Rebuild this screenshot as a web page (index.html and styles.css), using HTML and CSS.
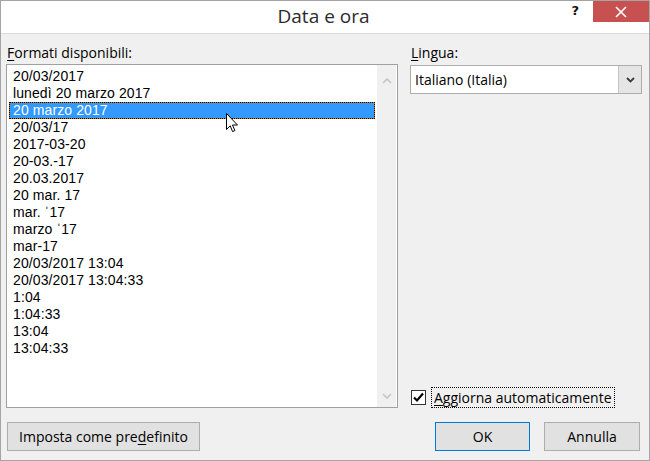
FILE: index.html
```html
<!DOCTYPE html>
<html lang="it">
<head>
<meta charset="utf-8">
<title>Data e ora</title>
<link rel="stylesheet" href="styles.css">
</head>
<body>
<div class="window">
  <div class="titlebar">
    <div class="tb-side"></div>
    <div class="title">Data e ora</div>
    <div class="tb-side tb-right">
      <span class="help">?</span>
      <span class="close"><svg width="12" height="12" viewBox="0 0 12 12"><path d="M1 1 L11 11 M11 1 L1 11" stroke="#fff" stroke-width="1.6" fill="none"/></svg></span>
    </div>
  </div>
  <div class="content">
    <div class="main">
      <div class="col col-left">
        <div class="label"><u>F</u>ormati disponibili:</div>
        <div class="listbox">
          <ul class="items">
            <li>20/03/2017</li>
            <li>lunedì 20 marzo 2017</li>
            <li class="selected">20 marzo 2017</li>
            <li>20/03/17</li>
            <li>2017-03-20</li>
            <li>20-03.-17</li>
            <li>20.03.2017</li>
            <li>20 mar. 17</li>
            <li>mar. ˈ17</li>
            <li>marzo ˈ17</li>
            <li>mar-17</li>
            <li>20/03/2017 13:04</li>
            <li>20/03/2017 13:04:33</li>
            <li>1:04</li>
            <li>1:04:33</li>
            <li>13:04</li>
            <li>13:04:33</li>
          </ul>
          <div class="scrollbar">
            <div class="sb-up"><svg width="10" height="6" viewBox="0 0 10 6"><path d="M1 5 L5 1 L9 5" stroke="#c4c4c4" stroke-width="1.6" fill="none"/></svg></div>
            <div class="sb-track"></div>
            <div class="sb-down"><svg width="10" height="6" viewBox="0 0 10 6"><path d="M1 1 L5 5 L9 1" stroke="#c4c4c4" stroke-width="1.6" fill="none"/></svg></div>
          </div>
          <svg class="cursor" width="13" height="20" viewBox="0 0 13 20"><path d="M0.5 0.5 L0.5 16.5 L4.2 12.8 L6.6 18.6 L8.9 17.6 L6.5 12 L11.5 12 Z" fill="#fff" stroke="#000" stroke-width="1" stroke-linejoin="miter"/></svg>
        </div>
      </div>
      <div class="col col-right">
        <div class="label"><u>L</u>ingua:</div>
        <div class="combo">
          <span class="combo-text">Italiano (Italia)</span>
          <span class="combo-btn"><svg width="9" height="6" viewBox="0 0 9 6"><path d="M1 1 L4.5 4.5 L8 1" stroke="#3c3c3c" stroke-width="1.8" fill="none"/></svg></span>
        </div>
        <div class="spacer"></div>
        <div class="check">
          <span class="box"><svg width="13" height="13" viewBox="0 0 13 13"><path d="M2 6.5 L5 9.5 L11 2.5" stroke="#000" stroke-width="2.2" fill="none"/></svg></span>
          <span class="check-label"><u>A</u>ggiorna automaticamente</span>
        </div>
      </div>
    </div>
    <div class="footer">
      <button class="btn btn-set">Imposta come pre<u>d</u>efinito</button>
      <div class="footer-right">
        <button class="btn btn-ok">OK</button>
        <button class="btn btn-cancel">Annulla</button>
      </div>
    </div>
  </div>
</div>
</body>
</html>
```

FILE: styles.css
```css
* { box-sizing: border-box; }
html, body { margin: 0; padding: 0; }
body {
  width: 650px;
  height: 461px;
  overflow: hidden;
  background: #f0f0f0;
  font-family: "Open Sans", "Noto Sans", sans-serif;
  font-size: 14px;
  color: #000;
}
u { text-decoration: underline; text-underline-offset: 2px; text-decoration-thickness: 1px; }

.window {
  width: 650px;
  height: 461px;
  border: 1px solid #a4a4a4;
  display: flex;
  flex-direction: column;
  background: #f0f0f0;
}

.titlebar {
  height: 33px;
  flex: none;
  background: #fff;
  border-bottom: 1px solid #dadada;
  display: grid;
  grid-template-columns: 1fr auto 1fr;
  align-items: start;
}
.title {
  font-size: 19px;
  line-height: 24px;
  padding-top: 3px;
  color: #2b2b2b;
  white-space: nowrap;
  margin-left: -3px;
}
.tb-right {
  display: flex;
  justify-content: flex-end;
  align-items: flex-start;
}
.help {
  font-family: "DejaVu Sans", sans-serif;
  font-weight: bold;
  font-size: 13px;
  line-height: 14px;
  margin-top: 3px;
  margin-right: 14px;
  color: #111;
}
.close {
  width: 56px;
  height: 21px;
  background: #c75050;
  display: flex;
  align-items: center;
  justify-content: center;
}

.content {
  flex: 1;
  display: flex;
  flex-direction: column;
  padding: 10px 7px 9px 5px;
}
.main {
  flex: 1;
  display: flex;
  gap: 12px;
  min-height: 0;
}
.col {
  display: flex;
  flex-direction: column;
}
.col-left { width: 392px; }
.col-right { width: 232px; }

.label {
  line-height: 18px;
  height: 18px;
  margin-bottom: 2px;
  padding-left: 1px;
  white-space: nowrap;
}

.listbox {
  flex: 1;
  position: relative;
  display: flex;
  background: #fff;
  border: 1px solid #a0a0a0;
}
.items {
  list-style: none;
  margin: 0;
  padding: 3px 2px 0 2px;
  flex: 1;
  font-family: "Liberation Sans", Arial, sans-serif;
  font-size: 14px;
  letter-spacing: 0.1px;
}
.items li {
  height: 17px;
  line-height: 15px;
  padding-left: 3px;
  white-space: nowrap;
  border: 1px solid transparent;
}
.items li.selected {
  color: #fff;
  border: 1px dotted #000;
  background: linear-gradient(#3399ff, #3399ff) padding-box, linear-gradient(#c87a1e, #c87a1e) border-box;
}
.scrollbar {
  width: 19px;
  margin-right: 1px;
  background: #f0f0f0;
  display: flex;
  flex-direction: column;
}
.sb-up { height: 31px; display: flex; align-items: center; justify-content: center; padding-top: 1px; }
.sb-track { flex: 1; }
.sb-down { height: 23px; display: flex; align-items: center; justify-content: center; }
.cursor {
  position: absolute;
  left: 219px;
  top: 48px;
}

.combo {
  height: 29px;
  margin-top: 1px;
  background: #fff;
  border: 1px solid #adadad;
  display: flex;
  align-items: stretch;
}
.combo-text {
  flex: 1;
  padding-left: 4px;
  line-height: 27px;
}
.combo-btn {
  width: 23px;
  background: #e5e5e5;
  border-left: 1px solid #c4c4c4;
  display: flex;
  align-items: center;
  justify-content: center;
}
.spacer { flex: 1; }
.check {
  display: flex;
  align-items: center;
  height: 21px;
}
.box {
  width: 15px;
  height: 15px;
  margin-left: 1px;
  border: 1px solid #333;
  background: #fff;
  display: flex;
  align-items: center;
  justify-content: center;
}
.check-label {
  margin-left: 5px;
  height: 21px;
  line-height: 19px;
  padding: 0 2px;
  border: 1px dotted #000;
  white-space: nowrap;
}

.footer {
  flex: none;
  margin-top: 14px;
  height: 29px;
  display: flex;
  justify-content: space-between;
}
.btn {
  font-family: inherit;
  font-size: 14px;
  color: #000;
  height: 29px;
  padding: 0;
  background: #e1e1e1;
  border: 1px solid #adadad;
  border-radius: 0;
}
.btn-set { width: 193px; margin-left: 1px; }
.footer-right { display: flex; gap: 14px; margin-right: 2px; }
.btn-ok { width: 95px; border-color: #0078d7; }
.btn-cancel { width: 96px; }
```
